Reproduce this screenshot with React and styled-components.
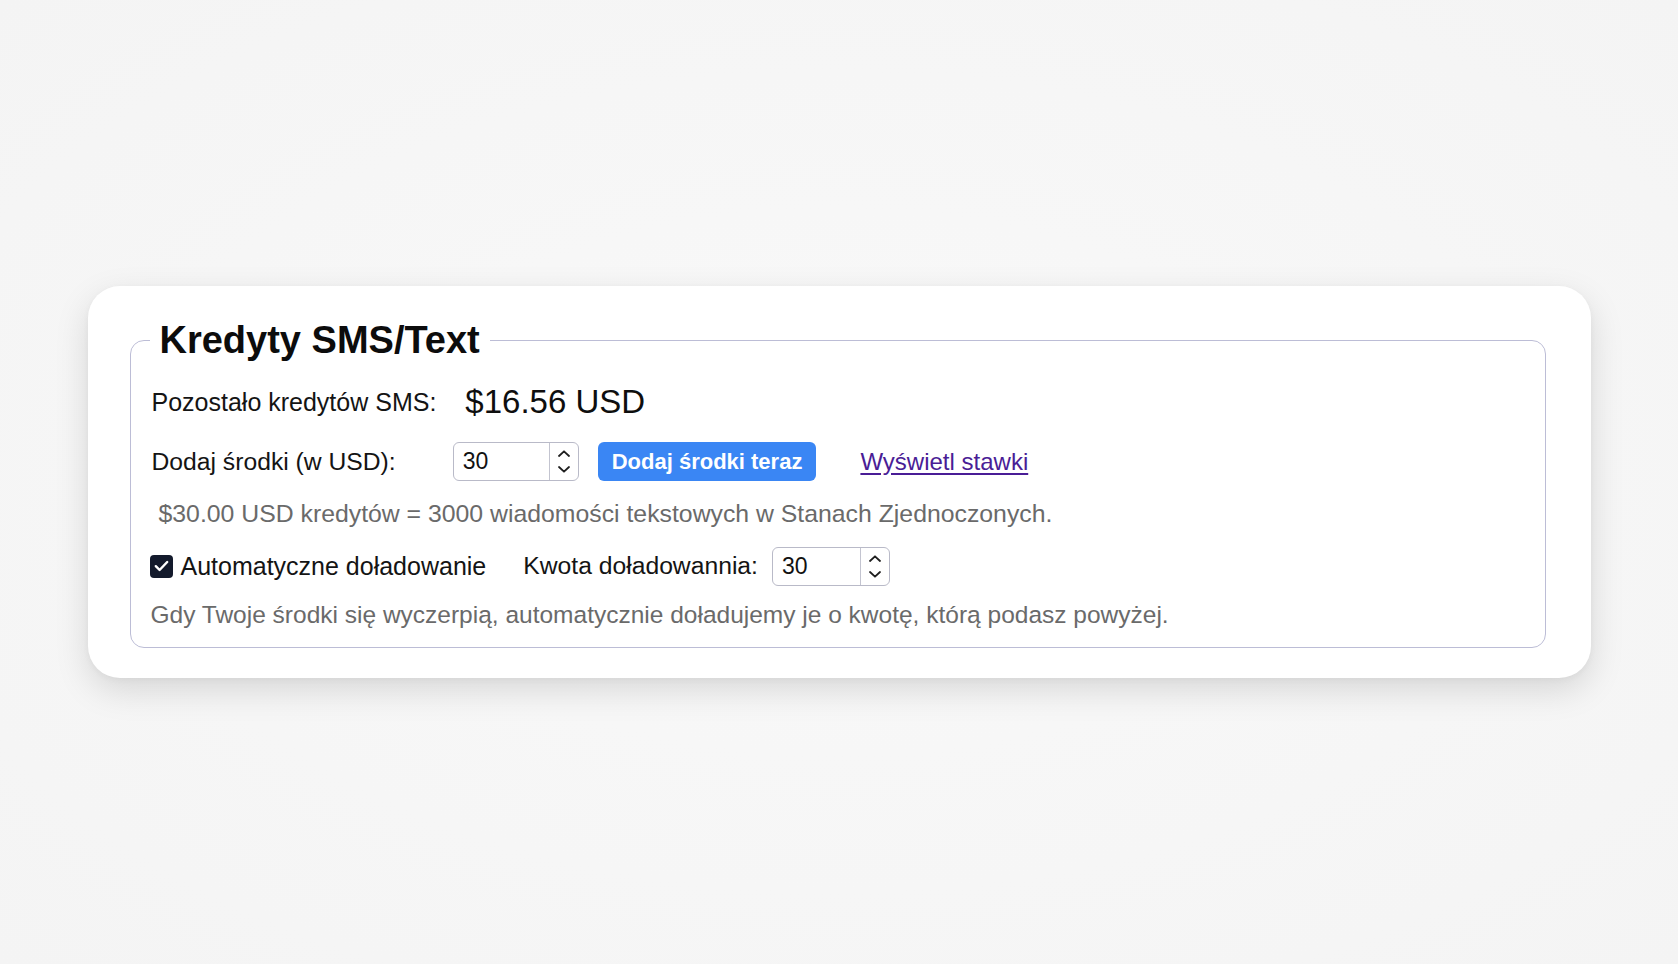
import React, { useState } from "react";
import styled, { createGlobalStyle } from "styled-components";

const GlobalStyle = createGlobalStyle`
  * {
    box-sizing: border-box;
  }
  body {
    margin: 0;
    background: #f6f6f6;
    font-family: "Liberation Sans", Arial, Helvetica, sans-serif;
    color: #111;
  }
`;

const Page = styled.div`
  min-height: 100vh;
  display: flex;
  align-items: center;
  justify-content: center;
  background: radial-gradient(ellipse at center, #f9f9f9 0%, #f4f4f4 100%);
`;

const Card = styled.div`
  width: 1503px;
  background: #fff;
  border-radius: 32px;
  padding: 33px 45px 30px 42px;
  box-shadow: 0 12px 34px rgba(0, 0, 0, 0.13), 0 2px 6px rgba(0, 0, 0, 0.04);
`;

const Fieldset = styled.fieldset`
  margin: 0;
  border: 1.5px solid #bcbdd6;
  border-radius: 14px;
  padding: 21px 20px 18px 21px;
  display: flex;
  flex-direction: column;
  min-width: 0;
`;

const Legend = styled.legend`
  font-size: 38px;
  line-height: 42px;
  font-weight: 700;
  padding: 0 10px;
  margin-left: -2px;
  color: #0c0c0c;
`;

const Row = styled.div`
  display: flex;
  align-items: center;
  height: ${({ h }) => h || 40}px;
  margin-top: ${({ mt }) => mt || 0}px;
`;

const Label = styled.span`
  font-size: ${({ size }) => size || 25}px;
  color: #141414;
  margin-right: ${({ gap }) => gap || 0}px;
  white-space: nowrap;
`;

const Balance = styled.span`
  font-size: 33px;
  color: #0e0e0e;
`;

const Hint = styled.p`
  margin: 0;
  font-size: ${({ size }) => size || 25}px;
  line-height: 28px;
  color: #6a6a6a;
  padding-left: ${({ indent }) => indent || 0}px;
  margin-top: ${({ mt }) => mt || 0}px;
  white-space: nowrap;
`;

const NumberBox = styled.div`
  display: flex;
  align-items: stretch;
  width: ${({ w }) => w}px;
  height: 39px;
  border: 1.5px solid #b9bac8;
  border-radius: 6px;
  background: #fff;
  overflow: hidden;
`;

const NumberInput = styled.input`
  flex: 1;
  min-width: 0;
  border: none;
  outline: none;
  padding: 0 0 0 9px;
  font-family: inherit;
  font-size: 23px;
  color: #111;
  background: transparent;
`;

const Spinner = styled.div`
  width: 29px;
  border-left: 1.5px solid #c3c4d0;
  display: flex;
  flex-direction: column;
  align-items: center;
  justify-content: center;
  gap: 9px;
`;

const PrimaryButton = styled.button`
  height: 39px;
  padding: 0 14px;
  border: none;
  border-radius: 6px;
  background: #3a86f4;
  color: #fff;
  font-family: inherit;
  font-size: 22px;
  font-weight: 700;
  cursor: pointer;
  margin-left: 19px;
`;

const RatesLink = styled.a`
  font-size: 24px;
  color: #4a1d96;
  text-decoration: underline;
  text-underline-offset: 3px;
  margin-left: 44px;
  cursor: pointer;
`;

const CheckLabel = styled.label`
  display: flex;
  align-items: center;
  cursor: pointer;
  margin-left: -2px;
  margin-right: 37px;
`;

const CheckBox = styled.span`
  width: 23px;
  height: 23px;
  border-radius: 4px;
  background: ${({ checked }) => (checked ? "#131a2c" : "#fff")};
  border: ${({ checked }) => (checked ? "none" : "1.5px solid #999")};
  display: flex;
  align-items: center;
  justify-content: center;
  margin-right: 8px;
`;

const Chevron = ({ up }) => (
  <svg width="12" height="7" viewBox="0 0 12 7" fill="none">
    <path
      d={up ? "M1 6L6 1.3L11 6" : "M1 1L6 5.7L11 1"}
      stroke="#1f1f1f"
      strokeWidth="1.8"
      strokeLinecap="round"
      strokeLinejoin="round"
    />
  </svg>
);

const Stepper = ({ value, onChange, width }) => (
  <NumberBox w={width}>
    <NumberInput
      value={value}
      onChange={(e) => onChange(e.target.value)}
    />
    <Spinner>
      <Chevron up />
      <Chevron />
    </Spinner>
  </NumberBox>
);

const App = () => {
  const [amount, setAmount] = useState("30");
  const [topUp, setTopUp] = useState("30");
  const [autoTopUp, setAutoTopUp] = useState(true);

  const credits = Number(amount) || 0;

  return (
    <>
      <GlobalStyle />
      <Page>
        <Card>
          <Fieldset>
            <Legend>Kredyty SMS/Text</Legend>
            <Row h={40}>
              <Label gap={29}>Pozostało kredytów SMS:</Label>
              <Balance>$16.56 USD</Balance>
            </Row>
            <Row h={39} mt={20}>
              <Label gap={57} size={24.7}>
                Dodaj środki (w USD):
              </Label>
              <Stepper value={amount} onChange={setAmount} width={126} />
              <PrimaryButton>Dodaj środki teraz</PrimaryButton>
              <RatesLink>Wyświetl stawki</RatesLink>
            </Row>
            <Hint indent={7} mt={19} size={24.8}>
              ${credits.toFixed(2)} USD kredytów = {credits * 100} wiadomości
              tekstowych w Stanach Zjednoczonych.
            </Hint>
            <Row h={38} mt={19}>
              <CheckLabel onClick={() => setAutoTopUp(!autoTopUp)}>
                <CheckBox checked={autoTopUp}>
                  {autoTopUp && (
                    <svg width="15" height="12" viewBox="0 0 15 12" fill="none">
                      <path
                        d="M1.8 6.2L5.6 10L13.2 2"
                        stroke="#fff"
                        strokeWidth="2.4"
                        strokeLinecap="round"
                        strokeLinejoin="round"
                      />
                    </svg>
                  )}
                </CheckBox>
                <Label>Automatyczne doładowanie</Label>
              </CheckLabel>
              <Label gap={14} size={24.7}>
                Kwota doładowannia:
              </Label>
              <Stepper value={topUp} onChange={setTopUp} width={118} />
            </Row>
            <Hint indent={0} mt={16} size={24.5} style={{ marginLeft: -1 }}>
              Gdy Twoje środki się wyczerpią, automatycznie doładujemy je o
              kwotę, którą podasz powyżej.
            </Hint>
          </Fieldset>
        </Card>
      </Page>
    </>
  );
};

export default App;
